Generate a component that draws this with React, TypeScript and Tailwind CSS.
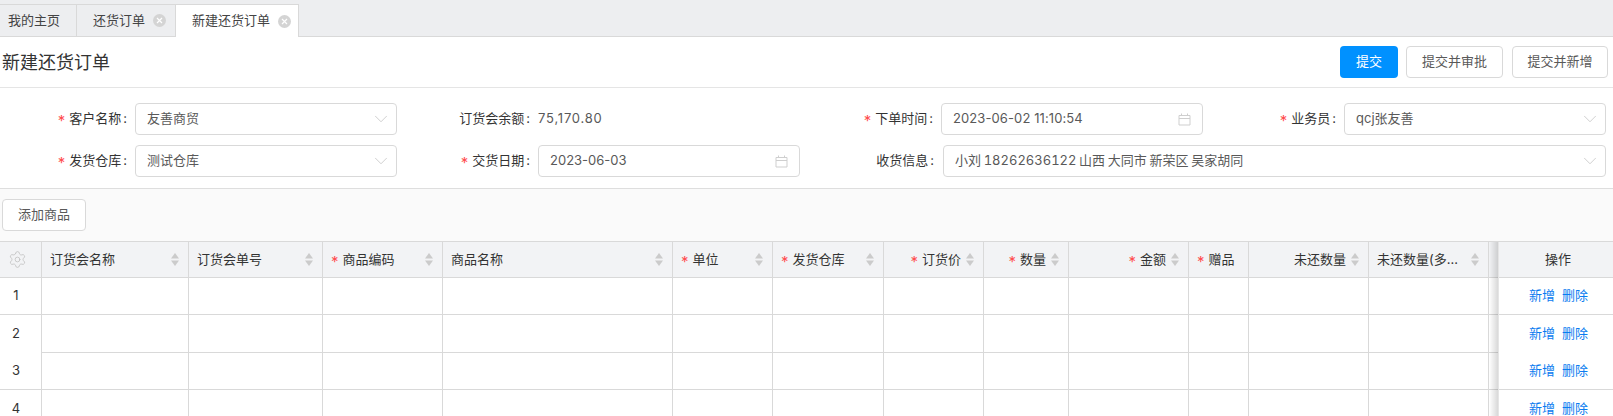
import React from 'react';
import { ChevronDown, Settings } from 'lucide-react';

const cols = [
  { label: '订货会名称', w: 147, sort: true },
  { label: '订货会单号', w: 134, sort: true },
  { label: '商品编码', w: 120, sort: true, req: true },
  { label: '商品名称', w: 230, sort: true },
  { label: '单位', w: 100, sort: true, req: true },
  { label: '发货仓库', w: 111, sort: true, req: true },
  { label: '订货价', w: 100, sort: true, req: true, right: true },
  { label: '数量', w: 85, sort: true, req: true, right: true },
  { label: '金额', w: 120, sort: true, req: true, right: true },
  { label: '赠品', w: 60, req: true },
  { label: '未还数量', w: 120, sort: true, right: true },
  { label: '未还数量(多...', w: 120, sort: true },
];

const Star = () => <span className="text-[#ff4d4f] text-[15px] leading-none mr-[4px] mt-[3px]">*</span>;

const Sorter = () => (
  <svg width="8" height="13" viewBox="0 0 8 13" className="shrink-0 fill-[#cbcbcb]">
    <path d="M4 0 L8 5.5 H0 Z" />
    <path d="M0 7.5 H8 L4 13 Z" />
  </svg>
);

const CloseDot = () => (
  <svg width="13" height="13" viewBox="0 0 13 13" className="shrink-0">
    <circle cx="6.5" cy="6.5" r="6.5" fill="#d4d4d4" />
    <path d="M4 4 L9 9 M9 4 L4 9" stroke="#fff" strokeWidth="1.2" />
  </svg>
);

const Calendar = () => (
  <svg width="13" height="13" viewBox="0 0 13 13" fill="none" stroke="#cfcfcf" strokeWidth="1" className="shrink-0">
    <path d="M1 2.5 H12 V12 H1 Z M1 5.5 H12 M3.5 0.5 V2.5 M9.5 0.5 V2.5" />
  </svg>
);

const Label = ({ text, req, className }: { text: string; req?: boolean; className: string }) => (
  <div className={`shrink-0 flex justify-end items-center text-[13px] text-[#333] ${className}`}>
    {req && <Star />}
    <span>{text}</span>
    <span className="ml-[2px] mr-[8px]">:</span>
  </div>
);

const Field = ({ value, icon, className, textClass }: { value: string; icon: 'select' | 'date'; className: string; textClass?: string }) => (
  <div className={`h-[32px] flex items-center justify-between px-[11px] bg-white border border-[#d9d9d9] rounded-[4px] text-[13px] text-[#595959] ${className}`}>
    <span className={textClass}>{value}</span>
    {icon === 'select' ? (
      <ChevronDown size={22} strokeWidth={0.8} className="text-[#bfbfbf] -mr-[7px] -mt-[1px]" />
    ) : (
      <Calendar />
    )}
  </div>
);

const rows = [
  { n: 1, h: 'h-[37px]', line: 'border-b border-[#d9d9d9]', numLine: 'border-b border-[#d9d9d9]', opLine: 'border-b border-[#d9d9d9]' },
  { n: 2, h: 'h-[38px]', line: 'border-b border-[#d9d9d9]', numLine: '', opLine: '' },
  { n: 3, h: 'h-[37px]', line: 'border-b border-[#d9d9d9]', numLine: 'border-b border-[#d9d9d9]', opLine: 'border-b border-[#d9d9d9]' },
  { n: 4, h: 'h-[38px]', line: '', numLine: '', opLine: '' },
];

export default function App() {
  return (
    <div className="w-[1613px] h-[416px] overflow-hidden bg-white font-['Inter','Noto_Sans_CJK_SC',sans-serif] text-[13px]">
      {/* tabs */}
      <div className="h-[37px] bg-[#edeef0] border-b border-[#d9d9d9] pt-[4px] flex items-stretch">
        <div className="w-[77px] border-t border-r border-[#d9d9d9] flex items-center pl-[8px] text-[#444]">我的主页</div>
        <div className="w-[98px] border-t border-[#d9d9d9] flex items-center pl-[16px] gap-[8px] text-[#444]">
          还货订单 <CloseDot />
        </div>
        <div className="w-[124px] -mb-[1px] bg-white border-t border-x border-[#d9d9d9] flex items-center pl-[16px] gap-[8px] text-[#444]">
          新建还货订单 <CloseDot />
        </div>
      </div>

      {/* title bar */}
      <div className="h-[51px] border-b border-[#e5e5e5] flex items-center justify-between pl-[2px] pr-[5px]">
        <div className="text-[18px] text-[#333]">新建还货订单</div>
        <div className="flex">
          <button className="w-[58px] h-[32px] rounded-[4px] bg-[#0091ff] text-white">提交</button>
          <button className="ml-[8px] w-[97px] h-[32px] rounded-[4px] bg-white border border-[#d9d9d9] text-[#595959]">提交并审批</button>
          <button className="ml-[9px] w-[96px] h-[32px] rounded-[4px] bg-white border border-[#d9d9d9] text-[#595959]">提交并新增</button>
        </div>
      </div>

      {/* form */}
      <div className="h-[101px] border-b border-[#dedede] pt-[15px] flex flex-col gap-[10px]">
        <div className="flex items-center">
          <Label text="客户名称" req className="w-[135px]" />
          <Field value="友善商贸" icon="select" className="w-[262px]" />
          <Label text="订货会余额" className="w-[141px]" />
          <span className="text-[#595959] tracking-[0.8px] w-[323px]">75,170.80</span>
          <Label text="下单时间" req className="w-[80px]" />
          <Field value="2023-06-02 11:10:54" icon="date" className="w-[262px]" textClass="tracking-[0.1px]" />
          <Label text="业务员" req className="w-[141px]" />
          <Field value="qcj张友善" icon="select" className="w-[262px]" />
        </div>
        <div className="flex items-center">
          <Label text="发货仓库" req className="w-[135px]" />
          <Field value="测试仓库" icon="select" className="w-[262px]" />
          <Label text="交货日期" req className="w-[141px]" />
          <Field value="2023-06-03" icon="date" className="w-[262px]" />
          <Label text="收货信息" className="w-[143px] pr-[1px]" />
          <Field
            value="小刘 18262636122 山西 大同市 新荣区 吴家胡同"
            icon="select"
            className="w-[663px]"
            textClass="tabular-nums [word-spacing:-0.8px]"
          />
        </div>
      </div>

      {/* toolbar */}
      <div className="h-[52px] bg-[#fafafa] flex items-start pt-[10px] pl-[2px]">
        <button className="w-[84px] h-[32px] rounded-[4px] bg-white border border-[#d9d9d9] text-[#595959]">添加商品</button>
      </div>

      {/* table */}
      <div className="border-t border-[#d9d9d9] flex">
        <div className="w-[1498px] shrink-0 relative">
          <div className="flex h-[36px] bg-[#f2f3f5] border-b border-[#d9d9d9]">
            <div className="w-[42px] shrink-0 flex items-center pl-[8px] border-r border-[#d9d9d9]">
              <Settings size={19} strokeWidth={1} className="text-[#bfbfbf]" />
            </div>
            {cols.map((c) => (
              <div
                key={c.label}
                style={{ width: c.w }}
                className={`shrink-0 flex items-center border-r border-[#d9d9d9] pl-[8px] pr-[9px] text-[#333] ${c.sort ? 'justify-between' : ''}`}
              >
                <span className={`flex items-center ${c.right ? 'ml-auto mr-[5px]' : ''}`}>
                  {c.req && <Star />}
                  {c.label}
                </span>
                {c.sort && <Sorter />}
              </div>
            ))}
          </div>
          {rows.map((r) => (
            <div key={r.n} className={`flex ${r.h}`}>
              <div className={`w-[42px] shrink-0 flex items-center justify-center pr-[9px] border-r border-[#d9d9d9] text-[#333] ${r.numLine}`}>{r.n}</div>
              <div className={`flex flex-1 ${r.line}`}>
                {cols.map((c) => (
                  <div key={c.label} style={{ width: c.w }} className="shrink-0 border-r border-[#d9d9d9]" />
                ))}
              </div>
            </div>
          ))}
          <div className="absolute top-0 bottom-0 right-0 w-[9px] bg-gradient-to-r from-transparent to-black/15" />
        </div>

        {/* fixed actions column */}
        <div className="flex-1 border-l border-[#e5e5e5]">
          <div className="h-[36px] bg-[#f2f3f5] border-b border-[#d9d9d9] flex items-center justify-center pl-[4px] text-[#333]">操作</div>
          {rows.map((r) => (
            <div key={r.n} className={`${r.h} ${r.opLine} flex items-center justify-center gap-[7px] pl-[5px] text-[#0a7cf0]`}>
              <span>新增</span>
              <span>删除</span>
            </div>
          ))}
        </div>
      </div>
    </div>
  );
}
